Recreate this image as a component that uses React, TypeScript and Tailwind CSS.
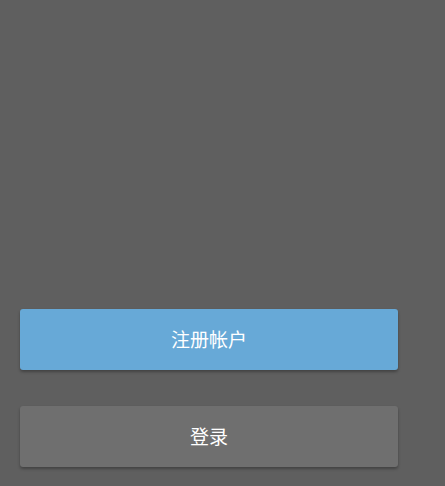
import React from "react";

export default function App() {
  return (
    <div
      className="min-h-[486px] w-full bg-[#5f5f5f] flex flex-col justify-end pb-[19px] pl-[20px]"
      style={{ fontFamily: '"Noto Sans CJK SC", "Noto Sans", sans-serif' }}
    >
      <div className="w-[378px] flex flex-col gap-[36px]">
        {/* Register */}
        <button className="h-[61px] w-full rounded-[3px] bg-[#67a9d7] text-white text-[19px] shadow-[0_2px_3px_rgba(0,0,0,0.3)]">
          注册帐户
        </button>

        {/* Login */}
        <button className="h-[61px] w-full rounded-[3px] bg-[#6f6f6f] text-white text-[19px] shadow-[0_2px_3px_rgba(0,0,0,0.3)]">
          登录
        </button>
      </div>
    </div>
  );
}
